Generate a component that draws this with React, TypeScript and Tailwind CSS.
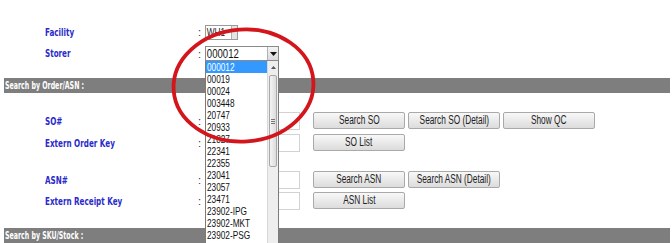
import React from "react";

const items = [
  "000012",
  "00019",
  "00024",
  "003448",
  "20747",
  "20933",
  "21827",
  "22341",
  "22355",
  "23041",
  "23057",
  "23471",
  "23902-IPG",
  "23902-MKT",
  "23902-PSG",
];

function Label({ children }: { children: React.ReactNode }) {
  return (
    <div className="w-[197px] shrink-0 pl-[45px] text-[10px] leading-[12px]">
      <span className="inline-block origin-left scale-x-[0.72] whitespace-nowrap font-['DejaVu_Sans',sans-serif] text-[10px] font-bold leading-[12px] text-[#2a2acb]">
        {children}
      </span>
    </div>
  );
}

function Colon() {
  return (
    <div className="w-[8px] shrink-0 pl-[1px] font-['Liberation_Sans',sans-serif] text-[11px] leading-[12px] text-[#333]">
      :
    </div>
  );
}

function Btn({ children }: { children: React.ReactNode }) {
  return (
    <div className="flex h-[17px] w-[92px] items-center justify-center rounded-[2px] border border-[#a9a9a9] bg-linear-to-b from-[#f8f8f8] to-[#dcdcdc] text-[12px] leading-[13px]">
      <span className="inline-block origin-center scale-x-[0.69] whitespace-nowrap font-['Liberation_Sans',sans-serif] text-[12px] leading-[13px] text-[#222]">
        {children}
      </span>
    </div>
  );
}

function Input() {
  return <div className="h-[18px] w-[95px] shrink-0 border border-[#d2d2d2] bg-white" />;
}

function Bar({ children }: { children: React.ReactNode }) {
  return (
    <div className="ml-[4px] mr-[2px] flex h-[15px] items-center bg-[#7e7e7e] pl-[1px] text-[11px] leading-[12px]">
      <span className="inline-block origin-left scale-x-[0.57] whitespace-nowrap font-['DejaVu_Sans',sans-serif] text-[11px] font-bold leading-[12px] text-white">
        {children}
      </span>
    </div>
  );
}

export default function App() {
  return (
    <div className="relative h-[243px] w-[672px] overflow-hidden bg-white">
      <div className="flex flex-col pt-[24px]">
        {/* Facility */}
        <div className="flex h-[16px] items-center">
          <Label>Facility</Label>
          <Colon />
          <div className="flex h-[15px] w-[33px] items-center border border-[#9a9a9a] bg-white text-[11px] leading-[12px]">
            <span className="inline-block flex-1 origin-left scale-x-[0.75] pl-[1px] font-['Liberation_Sans',sans-serif] text-[11px] leading-[12px] text-[#222]">
              WH1
            </span>
            <div className="h-full w-[10px] border-l border-[#b0b0b0] bg-[#e4e4e4]" />
          </div>
        </div>
        {/* Storer */}
        <div className="mt-[6px] flex h-[15px] items-center">
          <Label>Storer</Label>
          <Colon />
          <div className="flex h-[15px] w-[74px] items-center border border-[#8a8a8a] bg-white text-[12px] leading-[12px]">
            <span className="inline-block flex-1 origin-left scale-x-[0.8] pl-[1px] font-['Liberation_Sans',sans-serif] text-[12px] leading-[12px] text-[#111]">
              000012
            </span>
            <div className="flex h-full w-[11px] items-center justify-center border-l border-[#b0b0b0] bg-linear-to-b from-[#f4f4f4] to-[#dadada]">
              <svg width="7" height="4" viewBox="0 0 7 4">
                <path d="M0 0 H7 L3.5 4 Z" fill="#111" />
              </svg>
            </div>
          </div>
        </div>

        <div className="mt-[17px]">
          <Bar>Search by Order/ASN :</Bar>
        </div>

        {/* SO# */}
        <div className="mt-[19px] flex h-[18px] items-start">
          <div className="flex h-[18px] items-center">
            <Label>SO#</Label>
            <Colon />
          </div>
          <Input />
          <div className="ml-[13px] flex gap-[3px]">
            <Btn>Search SO</Btn>
            <Btn>Search SO (Detail)</Btn>
            <Btn>Show QC</Btn>
          </div>
        </div>
        {/* Extern Order Key */}
        <div className="mt-[4px] flex h-[18px] items-start">
          <div className="flex h-[18px] items-center">
            <Label>Extern Order Key</Label>
            <Colon />
          </div>
          <Input />
          <div className="ml-[13px] flex gap-[3px]">
            <Btn>SO List</Btn>
          </div>
        </div>

        {/* ASN# */}
        <div className="mt-[19px] flex h-[18px] items-start">
          <div className="flex h-[18px] items-center">
            <Label>ASN#</Label>
            <Colon />
          </div>
          <Input />
          <div className="ml-[13px] flex gap-[3px]">
            <Btn>Search ASN</Btn>
            <Btn>Search ASN (Detail)</Btn>
          </div>
        </div>
        {/* Extern Receipt Key */}
        <div className="mt-[3px] flex h-[18px] items-start">
          <div className="flex h-[18px] items-center">
            <Label>Extern Receipt Key</Label>
            <Colon />
          </div>
          <Input />
          <div className="ml-[13px] flex gap-[3px]">
            <Btn>ASN List</Btn>
          </div>
        </div>

        <div className="mt-[18px]">
          <Bar>Search by SKU/Stock :</Bar>
        </div>
      </div>

      {/* Dropdown list overlay */}
      <div className="absolute left-[205px] top-[61px] flex h-[200px] w-[74px] border-x border-[#7a7a7a] bg-white">
        <div className="flex w-[61px] flex-col">
          {items.map((it, i) => (
            <div
              key={it}
              className={
                i === 0
                  ? "h-[12px] bg-[#3399ff] pl-[1px] text-[11px] leading-[12px] text-white"
                  : "h-[12px] pl-[1px] text-[11px] leading-[12px] text-[#111]"
              }
            >
              <span className="inline-block origin-left scale-x-[0.75] whitespace-nowrap font-['Liberation_Sans',sans-serif] text-[11px] leading-[12px]">
                {it}
              </span>
            </div>
          ))}
        </div>
        <div className="flex w-[11px] flex-col border-l border-[#d8d8d8] bg-[#eeeeee]">
          <div className="flex h-[12px] items-center justify-center">
            <svg width="5" height="3" viewBox="0 0 5 3">
              <path d="M0 3 L2.5 0 L5 3 Z" fill="#555" />
            </svg>
          </div>
          <div className="mx-[1px] mt-[2px] flex h-[92px] flex-col items-center justify-center gap-[1px] rounded-[2px] border border-[#a8a8a8] bg-linear-to-r from-[#f4f4f4] to-[#dcdcdc]">
            <div className="h-px w-[4px] bg-[#777]" />
            <div className="h-px w-[4px] bg-[#777]" />
            <div className="h-px w-[4px] bg-[#777]" />
          </div>
        </div>
      </div>

      {/* Red hand-drawn ellipse */}
      <svg
        className="pointer-events-none absolute left-0 top-0"
        width="672"
        height="243"
        viewBox="0 0 672 243"
      >
        <ellipse
          cx="243.5"
          cy="85.5"
          rx="70"
          ry="56"
          transform="rotate(-4 243.5 85.5)"
          fill="none"
          stroke="#d3161c"
          strokeWidth="3.8"
        />
      </svg>
    </div>
  );
}
